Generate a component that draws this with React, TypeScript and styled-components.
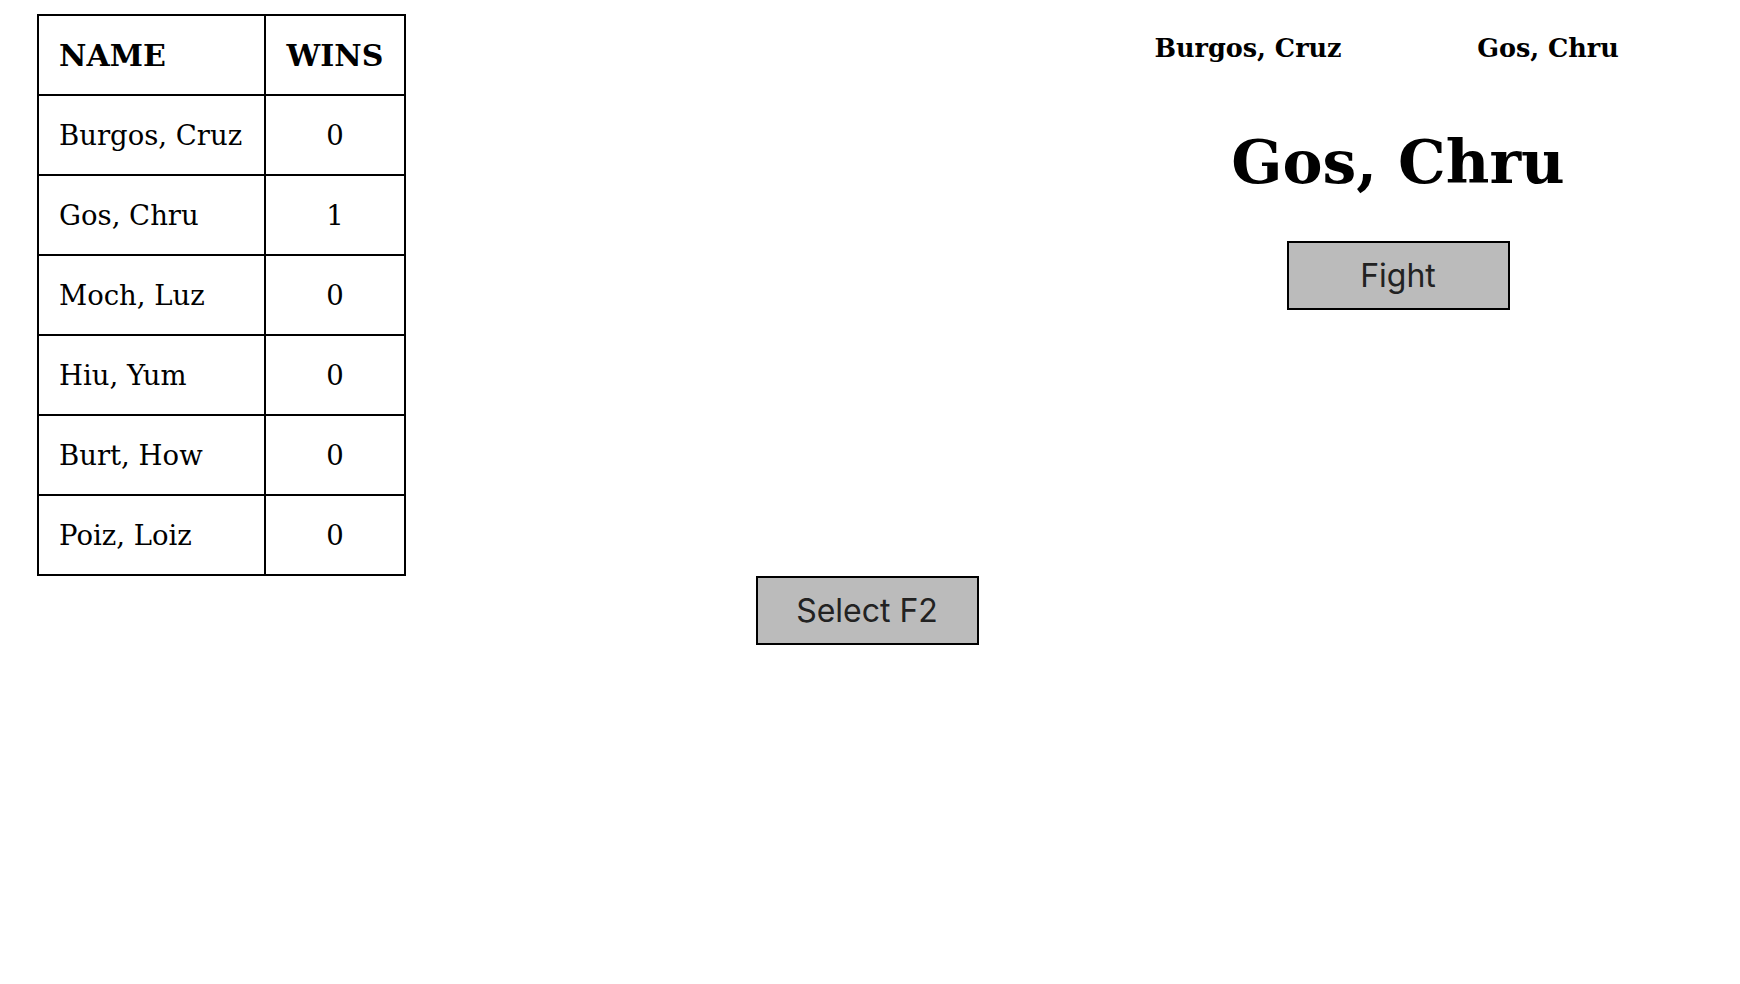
import React from "react";
import styled, { createGlobalStyle } from "styled-components";

const fighters = [
  { name: "Burgos, Cruz", wins: 0 },
  { name: "Gos, Chru", wins: 1 },
  { name: "Moch, Luz", wins: 0 },
  { name: "Hiu, Yum", wins: 0 },
  { name: "Burt, How", wins: 0 },
  { name: "Poiz, Loiz", wins: 0 },
];

const GlobalStyle = createGlobalStyle`
  body {
    margin: 0;
    background: #ffffff;
    color: #000000;
    font-family: "DejaVu Serif", Georgia, serif;
  }
`;

const App = () => {
  const f1 = fighters[0];
  const f2 = fighters[1];
  const winner = f2;

  return (
    <Page>
      <GlobalStyle />
      <TopRow>
        <ScoreTable>
          <colgroup>
            <col style={{ width: 227 }} />
            <col style={{ width: 140 }} />
          </colgroup>
          <thead>
            <tr>
              <HeadCell>NAME</HeadCell>
              <HeadCell $center>WINS</HeadCell>
            </tr>
          </thead>
          <tbody>
            {fighters.map((f) => (
              <tr key={f.name}>
                <Cell>{f.name}</Cell>
                <Cell $center>{f.wins}</Cell>
              </tr>
            ))}
          </tbody>
        </ScoreTable>

        <Arena>
          <Matchup>
            <Contender>{f1.name}</Contender>
            <Contender>{f2.name}</Contender>
          </Matchup>
          <Champion>{winner.name}</Champion>
          <ActionButton>Fight</ActionButton>
        </Arena>
      </TopRow>

      <Controls>
        <ActionButton>Select F2</ActionButton>
      </Controls>
    </Page>
  );
};

export default App;

const Page = styled.div`
  width: 1740px;
  min-height: 984px;
`;

const TopRow = styled.div`
  display: flex;
  justify-content: space-between;
  align-items: flex-start;
`;

const ScoreTable = styled.table`
  margin: 14px 0 0 37px;
  border-collapse: collapse;
  table-layout: fixed;
  width: 367px;
  border: 2px solid #000;
  font-size: 27.5px;
`;

const HeadCell = styled.th<{ $center?: boolean }>`
  box-sizing: border-box;
  height: 80px;
  padding: 0 0 0 20px;
  border: 2px solid #000;
  font-size: 30px;
  font-weight: bold;
  text-align: ${(p) => (p.$center ? "center" : "left")};
  ${(p) => p.$center && "padding: 0;"}
`;

const Cell = styled.td<{ $center?: boolean }>`
  box-sizing: border-box;
  height: 80px;
  padding: 0 0 0 20px;
  border: 2px solid #000;
  text-align: ${(p) => (p.$center ? "center" : "left")};
  ${(p) => p.$center && "padding: 0;"}
`;

const Arena = styled.div`
  width: 684px;
  padding-top: 33px;
  display: flex;
  flex-direction: column;
  align-items: center;
`;

const Matchup = styled.div`
  display: grid;
  grid-template-columns: 300px 300px;
  justify-items: center;
`;

const Contender = styled.div`
  font-size: 25.5px;
  font-weight: bold;
`;

const Champion = styled.h1`
  margin: 64px 0 0;
  font-size: 60px;
  font-weight: bold;
`;

const ActionButton = styled.button`
  box-sizing: border-box;
  width: 223px;
  height: 69px;
  margin-top: 44px;
  background: #bbbbbb;
  border: 2px solid #000;
  border-radius: 0;
  color: #222222;
  font-family: Inter, "Liberation Sans", sans-serif;
  font-size: 32px;
  cursor: pointer;
`;

const Controls = styled.div`
  display: flex;
  justify-content: center;
  padding-right: 6px;
  margin-top: -44px;
`;
